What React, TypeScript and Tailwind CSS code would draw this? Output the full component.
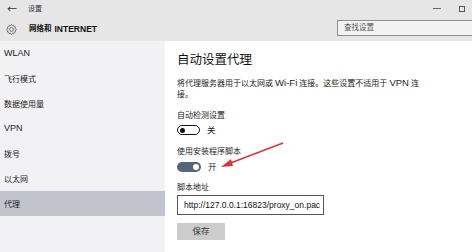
import React from "react";

const font = { fontFamily: '"Noto Sans", "Noto Sans CJK SC", sans-serif' };
const latin = { fontFamily: '"Liberation Sans", "Noto Sans CJK SC", sans-serif' };

function Gear() {
  return (
    <svg width="13" height="13" viewBox="0 0 24 24" fill="none" stroke="#555" strokeWidth="1.4">
      <path d="M12 2.5l1.6 2.3 2.7-.7.6 2.7 2.7.8-.7 2.7 2.3 1.7-2.3 1.6.7 2.7-2.7.8-.6 2.7-2.7-.7L12 21.5l-1.6-2.3-2.7.7-.6-2.7-2.7-.8.7-2.7L2.8 12l2.3-1.7-.7-2.7 2.7-.8.6-2.7 2.7.7z" />
      <circle cx="12" cy="12" r="3.6" />
    </svg>
  );
}

export default function App() {
  const nav: [string, boolean][] = [
    ["WLAN", true],
    ["飞行模式", false],
    ["数据使用量", false],
    ["VPN", true],
    ["拨号", false],
    ["以太网", false],
    ["代理", false],
  ];
  return (
    <div className="relative w-[472px] h-[252px] overflow-hidden bg-white text-[#1a1a1a]" style={font}>
      {/* top area */}
      <div className="h-[41px] bg-[#e6e6e6] flex flex-col">
        <div className="h-[17px] flex items-center">
          <span className="w-[28px] pl-[7px] text-[10px] leading-none text-[#333]">←</span>
          <span className="text-[7px] leading-none text-[#333]">设置</span>
          <div className="flex-1" />
          <span className="w-[8px] h-px bg-[#666] mr-[18px]" />
          <span className="w-[6px] h-[6px] border border-[#555] mr-[7px]" />
        </div>
        <div className="flex-1 flex items-center">
          <span className="w-[29px] pl-[5px] flex items-center"><Gear /></span>
          <span className="text-[7.5px] font-bold leading-none text-[#111]">网络和</span>
          <span className="ml-[3px] text-[8.5px] font-bold leading-none text-[#111]" style={latin}>INTERNET</span>
          <div className="flex-1" />
          <div className="w-[138px] h-[16px] border border-[#8f8f8f] bg-[#f2f2f2] flex items-center pl-[6px] mb-[2px] -mr-[3px]">
            <span className="text-[7.5px] text-[#555] leading-none">查找设置</span>
          </div>
        </div>
      </div>
      <div className="flex h-[211px]">
        {/* nav */}
        <div className="w-[165px] bg-[#f2f2f4] flex flex-col">
          {nav.map(([n, isLatin]) => (
            <div
              key={n}
              className={`h-[25px] flex items-center pl-[4px] ${isLatin ? "text-[9px] font-medium" : "text-[8px]"} ${n === "代理" ? "bg-[#c1c4cd]" : ""}`}
              style={isLatin ? latin : undefined}
            >
              {n}
            </div>
          ))}
        </div>
        {/* content */}
        <div className="flex-1 flex flex-col pl-[12px] pt-[11px]">
          <div className="text-[12.5px] leading-[16px] text-[#111]">自动设置代理</div>
          <div className="mt-[9px] text-[8px] leading-[11px] whitespace-nowrap text-[#222]">
            将代理服务器用于以太网或 <span className="text-[9.5px]" style={latin}>Wi-Fi</span> 连接。这些设置不适用于 <span className="text-[9.5px]" style={latin}>VPN</span> 连
            <br />
            接。
          </div>
          <div className="mt-[10px] text-[8px] leading-[11px] text-[#222]">自动检测设置</div>
          <div className="mt-[5px] h-[10px] flex items-center gap-[7px]">
            <div className="w-[23px] h-[10px] rounded-full border-[1.5px] border-[#111] bg-white flex items-center pl-[2px]">
              <div className="w-[5px] h-[5px] rounded-full bg-[#111]" />
            </div>
            <span className="text-[8.5px] leading-none">关</span>
          </div>
          <div className="mt-[10px] text-[8px] leading-[11px] text-[#222]">使用安装程序脚本</div>
          <div className="mt-[6px] h-[10px] flex items-center gap-[7px]">
            <div className="w-[24px] h-[10px] rounded-full bg-[#55667a] flex items-center justify-end pr-[2px]">
              <div className="w-[6px] h-[6px] rounded-full bg-white" />
            </div>
            <span className="text-[8.5px] leading-none">开</span>
          </div>
          <div className="mt-[9px] text-[8px] leading-[11px] text-[#222]">脚本地址</div>
          <div className="mt-[3px] w-[147px] h-[20px] border border-[#555] flex items-center pl-[6px] bg-white overflow-hidden">
            <span className="text-[8.5px] leading-none text-[#111] whitespace-nowrap" style={latin}>http://127.0.0.1:16823/proxy_on.pac</span>
          </div>
          <div className="mt-[8px] w-[48px] h-[17px] bg-[#cccccc] flex items-center justify-center">
            <span className="text-[8.5px] leading-none text-[#333]">保存</span>
          </div>
        </div>
      </div>
      {/* red annotation arrow */}
      <svg className="absolute left-0 top-0 pointer-events-none" width="472" height="252">
        <line x1="283" y1="143" x2="228" y2="164" stroke="#d23a3a" strokeWidth="1.6" />
        <polygon points="221,167 231,159 233,166" fill="#d23a3a" />
      </svg>
    </div>
  );
}
